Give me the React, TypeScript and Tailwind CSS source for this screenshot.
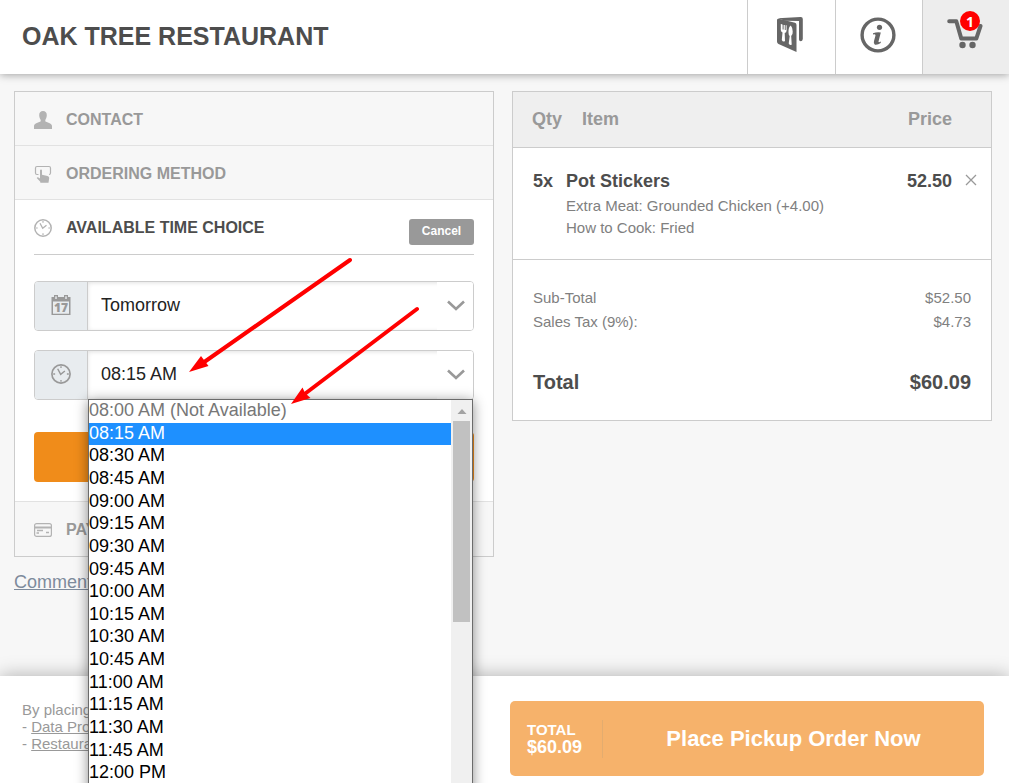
import { ReactNode, useState } from 'react';

const TIMES = [
	'08:00 AM',
	'08:15 AM',
	'08:30 AM',
	'08:45 AM',
	'09:00 AM',
	'09:15 AM',
	'09:30 AM',
	'09:45 AM',
	'10:00 AM',
	'10:15 AM',
	'10:30 AM',
	'10:45 AM',
	'11:00 AM',
	'11:15 AM',
	'11:30 AM',
	'11:45 AM',
	'12:00 PM',
];

const NOT_AVAILABLE = ['08:00 AM'];

const MenuIcon = () => (
	<svg width="26" height="36" viewBox="0 0 26 36" fill="#666">
		<path
			fillRule="evenodd"
			d="M0 4Q0 2.500 2 2.700L18 6.800Q19.500 7.300 19.500 9V36L1.500 28Q0 27.300 0 25.500ZM3.800 8V14Q3.800 15.800 5.500 16.500L4.800 24Q6 26.500 8 25L7.700 17Q9.600 16.500 9.600 14.500V9.300H8.700V14H7.800V8.900H6.600V13.500H5.600V8.500H4.700V8ZM13.800 9.500Q11.300 11 11.500 16.500Q11.500 19 12.700 20L11.700 27.500Q13.200 30 14.700 28.500L14.200 20Q16 18.500 15.700 15.500Q15.300 11 13.800 9.500Z"
		/>
		<path d="M1 2.300 23.500 1Q25.800 0.800 25.800 3V23Q25.500 25.300 23.700 25.300Q22 25.300 22 23.500V5L8 4.700Z" />
	</svg>
);

const InfoIcon = () => (
	<svg width="36" height="36" viewBox="0 0 36 36">
		<circle cx="18" cy="18" r="15.900" fill="none" stroke="#666" strokeWidth="3.400" />
		<circle cx="19.500" cy="10.300" r="2.600" fill="#666" />
		<path
			fill="#666"
			d="M13 16.200Q17 14.600 20.800 15.400L18.500 24.400Q18.300 25.900 20.900 24.600L20.700 26Q17.800 28.200 14.900 27.700Q13.200 27 14 24L15.500 18.400Q15.600 17 13 17.500Z"
		/>
	</svg>
);

const CartIcon = () => (
	<svg width="36" height="36" viewBox="0 0 36 36">
		<path
			d="M2.200 7.200H9.300L14.300 24.600H29.300L33.500 12"
			fill="none"
			stroke="#666"
			strokeWidth="4"
			strokeLinecap="round"
			strokeLinejoin="round"
		/>
		<circle cx="15.500" cy="31" r="3.200" fill="#666" />
		<circle cx="25.500" cy="31" r="3.200" fill="#666" />
	</svg>
);

const PersonIcon = () => (
	<svg width="18" height="18" viewBox="0 0 18 18" fill="#b3b3b3">
		<path d="M9 0C11.400 0 13 1.700 12.800 4.500C12.700 7 11.700 8 11.300 9V10.300C12.500 11.600 18 12 18 15V18H0V15C0 12 5.500 11.600 6.700 10.300V9C6.300 8 5.300 7 5.200 4.500C5 1.700 6.600 0 9 0Z" />
	</svg>
);

const TapIcon = () => (
	<svg width="18" height="18" viewBox="0 0 18 18">
		<path
			d="M4.500 9.500H3Q1.500 9.500 1.500 8V3Q1.500 1.500 3 1.500H15Q16.500 1.500 16.500 3V8Q16.500 9.500 15 9.500"
			fill="none"
			stroke="#b3b3b3"
			strokeWidth="1.200"
		/>
		<path
			fill="#b3b3b3"
			d="M6 5.500Q6.100 4.600 7 4.600Q8 4.600 8 5.500V9.800L13.500 11Q15.300 11.300 15.200 13L14.500 17.700H6.300V16.700L2.700 13Q3.300 11.900 4.500 12.500L6 13.500Z"
		/>
	</svg>
);

const ClockIcon = ({ size, color }: { size: number; color: string }) => (
	<svg width={size} height={size} viewBox="0 0 18 18" fill="none" stroke={color}>
		<circle cx="9" cy="9" r="8.200" strokeWidth="1.500" />
		<path d="M9 2V3.700M9 14.300V16M2 9H3.700M14.300 9H16" strokeWidth="1.200" />
		<path d="M6 4.300 8.700 9.300 12.500 6.300" strokeWidth="1.300" />
	</svg>
);

const CardIcon = () => (
	<svg width="18" height="14" viewBox="0 0 18 14" fill="none" stroke="#b3b3b3">
		<rect x="0.600" y="0.600" width="16.800" height="12.800" rx="2" strokeWidth="1.200" />
		<path d="M1 4.500H17" strokeWidth="2" />
		<path d="M3 7.500H9M2.500 10H5M12 9.500H15" strokeWidth="1.400" />
	</svg>
);

const CalendarIcon = () => (
	<svg width="20" height="20" viewBox="0 0 20 20">
		<path
			fill="#999"
			fillRule="evenodd"
			d="M0.500 2H3V0H7V2H13V0H17V2H19.500V20H0.500V2ZM4.300 1.200V4H5.700V1.200ZM14.300 1.200V4H15.700V1.200ZM2 6.500V18.700H18V6.500Z"
		/>
		<text
			x="10"
			y="17"
			textAnchor="middle"
			fill="#999"
			fontSize="12"
			fontWeight="800"
			fontFamily="Open Sans, sans-serif"
		>
			17
		</text>
	</svg>
);

type SectionRowProps = {
	icon: ReactNode;
	title: string;
};

const SectionRow = ({ icon, title }: SectionRowProps) => (
	<div className="flex h-[53px] items-center gap-[14px] bg-[#f7f7f7] px-[19px] pt-[2px] text-[16px] font-bold text-[#999]">
		{icon}
		<h2>{title}</h2>
	</div>
);

type SelectFieldProps = {
	id: string;
	label: string;
	icon: ReactNode;
	value: string;
	options: string[];
	onChange: (value: string) => void;
};

const SelectField = ({ id, label, icon, value, options, onChange }: SelectFieldProps) => (
	<div className="relative flex h-[50px] overflow-hidden rounded border border-[#ccc]">
		<label
			htmlFor={id}
			aria-label={label}
			className="flex w-[53px] shrink-0 items-center justify-center border-r border-[#ccc] bg-[#e8ecef] pb-[3px]"
		>
			{icon}
		</label>
		<select
			id={id}
			value={value}
			onChange={(e) => onChange(e.target.value)}
			className="min-w-0 flex-1 appearance-none bg-white pb-[2px] pl-[13px] text-[18px] text-[#222] shadow-[inset_0_1px_4px_rgba(0,0,0,0.12)] outline-none"
		>
			{options.map((option) => (
				<option key={option} value={option}>
					{option}
				</option>
			))}
		</select>
		<span className="pointer-events-none absolute inset-y-0 right-0 flex w-9 items-center bg-white pb-[2px] pl-[10px]">
			<svg width="18" height="11" viewBox="0 0 18 11" fill="none" stroke="#999" strokeWidth="2.600">
				<path d="M1 1.500 9 9 17 1.500" />
			</svg>
		</span>
	</div>
);

const TimeList = ({ value, onPick }: { value: string; onPick: (value: string) => void }) => (
	<div className="absolute top-[49px] right-[1px] left-[54px] z-20 flex h-[408px] border border-[#6b6b6b] bg-white shadow-[0_2px_12px_rgba(0,0,0,0.45)]">
		<ul role="listbox" aria-label="Time" className="grid h-[385px] min-w-0 flex-1 auto-rows-fr text-[18px] leading-[20px]">
			{TIMES.map((time) => {
				const disabled = NOT_AVAILABLE.includes(time);
				return (
					<li
						key={time}
						role="option"
						aria-selected={time === value}
						aria-disabled={disabled}
						onClick={() => !disabled && onPick(time)}
						className={
							disabled
								? 'text-[#777]'
								: time === value
									? 'bg-[#1e90ff] text-white'
									: 'text-black'
						}
					>
						{disabled ? `${time} (Not Available)` : time}
					</li>
				);
			})}
		</ul>
		<div className="flex w-[21px] flex-col items-center bg-[#f0f0f0]">
			<svg width="20" height="21" viewBox="0 0 20 21" fill="#a3a3a3">
				<path d="M5.500 14 10 9 14.500 14Z" />
			</svg>
			<div className="h-[201px] w-[17px] bg-[#c1c1c1]" />
		</div>
	</div>
);

const Pointers = () => (
	<svg
		width="480"
		height="330"
		viewBox="14 91 480 330"
		className="pointer-events-none absolute top-0 left-0 z-30"
		fill="#f00"
	>
		<path d="M350 260 200 365M417 309 302 396" stroke="#f00" strokeWidth="4" strokeLinecap="round" />
		<path d="M189 372 201 356 204 360 208.500 366Z" />
		<path d="M291 404 302.500 387.500 305 393 310.500 398Z" />
	</svg>
);

const Header = () => (
	<header className="relative z-10 flex h-[74px] shrink-0 bg-white shadow-[0_1px_8px_rgba(0,0,0,0.35)]">
		<h1 className="flex flex-1 items-center pl-[22px] text-[25px] font-bold text-[#4d4d4d]">
			OAK TREE RESTAURANT
		</h1>
		<button
			aria-label="Menu"
			className="flex w-[88px] items-center justify-center border-l border-[#ccc] pr-[3px] pb-[6px]"
		>
			<MenuIcon />
		</button>
		<button
			aria-label="Information"
			className="flex w-[87px] items-center justify-center border-l border-[#ccc] pr-[2px] pb-[5px]"
		>
			<InfoIcon />
		</button>
		<button
			aria-label="Cart"
			className="relative flex w-[87px] items-center justify-center border-l border-[#ccc] bg-[#ededed] pr-[2px] pb-[10px]"
		>
			<CartIcon />
			<span className="absolute top-[11px] left-[37px] flex size-[20px] items-center justify-center rounded-full bg-[#f00] font-['Open_Sans',sans-serif] text-[14px] font-bold text-white">
				1
			</span>
		</button>
	</header>
);

const OrderSummary = () => (
	<section className="self-start border border-[#ccc] bg-white text-[15px] text-[#808080]">
		<table className="w-full text-left">
			<thead className="border-b border-[#ccc] bg-[#efefef] text-[18px] leading-[24px] text-[#999]">
				<tr className="h-[55px]">
					<th className="w-[53px] pb-[1px] pl-[19px]">Qty</th>
					<th className="pb-[1px] pl-[16px]">Item</th>
					<th className="pb-[1px] text-right">Price</th>
					<td className="w-[39px]" />
				</tr>
			</thead>
			<tbody>
				<tr className="border-b border-[#ccc] align-top">
					<td className="pt-[21px] pl-[20px] text-[18px] leading-[24px] font-bold text-[#4d4d4d]">
						5x
					</td>
					<td className="pt-[21px] pb-[20px] leading-[22px]">
						<p className="mb-[2px] text-[18px] leading-[24px] font-bold text-[#4d4d4d]">
							Pot Stickers
						</p>
						<p>Extra Meat: Grounded Chicken (+4.00)</p>
						<p>How to Cook: Fried</p>
					</td>
					<td className="pt-[21px] text-right text-[18px] leading-[24px] font-bold text-[#4d4d4d]">
						52.50
					</td>
					<td className="pt-[21px]">
						<button aria-label="Remove item" className="flex h-[22px] items-center pl-[13px]">
							<svg width="12" height="12" viewBox="0 0 12 12" stroke="#999" strokeWidth="1.300">
								<path d="M1 1 11 11M11 1 1 11" />
							</svg>
						</button>
					</td>
				</tr>
			</tbody>
		</table>
		<dl className="px-[20px] pt-[26px] pb-[26px] leading-[24px]">
			<div className="flex justify-between">
				<dt>Sub-Total</dt>
				<dd>$52.50</dd>
			</div>
			<div className="flex justify-between">
				<dt>Sales Tax (9%):</dt>
				<dd>$4.73</dd>
			</div>
			<div className="mt-[36px] flex justify-between text-[20px] font-bold text-[#4d4d4d]">
				<dt>Total</dt>
				<dd>$60.09</dd>
			</div>
		</dl>
	</section>
);

const Footer = () => (
	<footer className="grid shrink-0 grid-cols-2 gap-[14px] bg-white pt-[25px] pr-[25px] pb-[7px] pl-[22px] shadow-[0_0_18px_rgba(0,0,0,0.3)]">
		<div className="text-[15px] leading-[17px] text-[#999]">
			<p>By placing</p>
			<p>
				-{' '}
				<a href="#data" className="underline">
					Data Pro
				</a>
			</p>
			<p>
				-{' '}
				<a href="#restaurant" className="underline">
					Restaura
				</a>
			</p>
		</div>
		<button className="flex h-[75px] items-center rounded-[5px] bg-[#f6b26b] font-bold text-white">
			<span className="flex h-[38px] w-[93px] flex-col justify-center border-r border-[#e3ac6f] pl-[17px] text-left">
				<span className="text-[15px] leading-[17px]">TOTAL</span>
				<span className="text-[18px] leading-[18px]">$60.09</span>
			</span>
			<span className="flex-1 text-center text-[22px]">Place Pickup Order Now</span>
		</button>
	</footer>
);

const App = () => {
	const [day, setDay] = useState('Tomorrow');
	const [time, setTime] = useState('08:15 AM');

	return (
		<div className="flex h-screen flex-col overflow-hidden bg-[#f7f7f7] font-['Liberation_Sans',Arial,sans-serif]">
			<Header />
			<main className="grid flex-1 grid-cols-2 gap-[18px] pt-[17px] pr-[17px] pl-[14px]">
				<div className="relative">
					<div className="border border-[#ccc]">
						<div className="border-b border-[#e2e2e2]">
							<SectionRow icon={<PersonIcon />} title="CONTACT" />
						</div>
						<div className="border-b border-[#e2e2e2]">
							<SectionRow icon={<TapIcon />} title="ORDERING METHOD" />
						</div>
						<div className="bg-white px-[19px] pb-[19px]">
							<div className="flex h-[55px] items-center border-b border-[#ccc] pt-[2px]">
								<ClockIcon size={18} color="#b3b3b3" />
								<h2 className="flex-1 pl-[14px] text-[16px] font-bold text-[#4d4d4d]">
									AVAILABLE TIME CHOICE
								</h2>
								<button className="mt-2 h-[26px] w-[65px] rounded-[3px] bg-[#999] pb-[3px] text-[12px] font-bold text-white">
									Cancel
								</button>
							</div>
							<div className="mt-[26px]">
								<SelectField
									id="day"
									label="Day"
									icon={<CalendarIcon />}
									value={day}
									options={['Today', 'Tomorrow']}
									onChange={setDay}
								/>
							</div>
							<div className="relative mt-[19px]">
								<SelectField
									id="time"
									label="Time"
									icon={<ClockIcon size={20} color="#999" />}
									value={time}
									options={TIMES}
									onChange={setTime}
								/>
								<TimeList value={time} onPick={setTime} />
							</div>
							<button
								aria-label="Save time"
								className="mt-[32px] block h-[50px] w-full rounded bg-[#f08c1a]"
							/>
						</div>
						<div className="border-t border-[#e2e2e2] bg-[#f7f7f7] pb-[1px]">
							<SectionRow icon={<CardIcon />} title="PAYMENT" />
						</div>
					</div>
					<a
						href="#comments"
						className="mt-[13px] inline-block text-[18px] leading-[24px] text-[#7e8b9c] underline"
					>
						Comments
					</a>
					<Pointers />
				</div>
				<OrderSummary />
			</main>
			<Footer />
		</div>
	);
};

export default App;
